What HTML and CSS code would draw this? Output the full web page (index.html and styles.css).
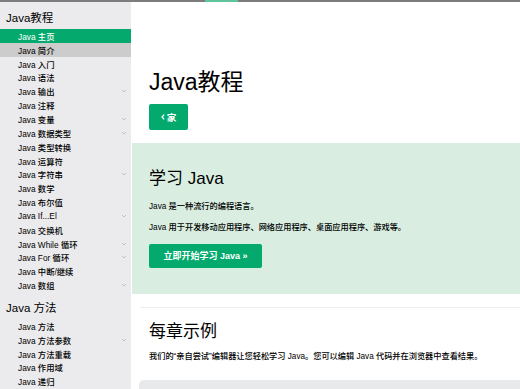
FILE: index.html
```html
<!DOCTYPE html>
<html lang="zh-CN">
<head>
    <meta charset="UTF-8">
    <meta name="viewport" content="width=device-width, initial-scale=1.0">
    <title>Java 教程</title>
    <link rel="stylesheet" href="styles.css">
</head>
<body>
    <div class="topbar"><span class="topbar-mark"></span></div>

    <div class="page">
        <nav class="sidebar">
            <h2 class="side-title">Java教程</h2>
            <a class="side-link active">Java 主页</a>
            <a class="side-link hover">Java 简介</a>
            <a class="side-link">Java 入门</a>
            <a class="side-link">Java 语法</a>
            <a class="side-link">Java 输出<svg class="chev" viewBox="0 0 6 4"><path d="M1 1l2 2 2-2"/></svg></a>
            <a class="side-link">Java 注释</a>
            <a class="side-link">Java 变量<svg class="chev" viewBox="0 0 6 4"><path d="M1 1l2 2 2-2"/></svg></a>
            <a class="side-link">Java 数据类型<svg class="chev" viewBox="0 0 6 4"><path d="M1 1l2 2 2-2"/></svg></a>
            <a class="side-link">Java 类型转换</a>
            <a class="side-link">Java 运算符</a>
            <a class="side-link">Java 字符串<svg class="chev" viewBox="0 0 6 4"><path d="M1 1l2 2 2-2"/></svg></a>
            <a class="side-link">Java 数学</a>
            <a class="side-link">Java 布尔值</a>
            <a class="side-link">Java If...El<svg class="chev" viewBox="0 0 6 4"><path d="M1 1l2 2 2-2"/></svg></a>
            <a class="side-link">Java 交换机</a>
            <a class="side-link">Java While 循环<svg class="chev" viewBox="0 0 6 4"><path d="M1 1l2 2 2-2"/></svg></a>
            <a class="side-link">Java For 循环<svg class="chev" viewBox="0 0 6 4"><path d="M1 1l2 2 2-2"/></svg></a>
            <a class="side-link">Java 中断/继续</a>
            <a class="side-link">Java 数组<svg class="chev" viewBox="0 0 6 4"><path d="M1 1l2 2 2-2"/></svg></a>

            <h2 class="side-title">Java 方法</h2>
            <a class="side-link">Java 方法</a>
            <a class="side-link">Java 方法参数<svg class="chev" viewBox="0 0 6 4"><path d="M1 1l2 2 2-2"/></svg></a>
            <a class="side-link">Java 方法重载</a>
            <a class="side-link">Java 作用域</a>
            <a class="side-link">Java 递归</a>
        </nav>

        <main class="content">
            <div class="intro">
                <h1>Java教程</h1>
                <a class="btn btn-home"><svg class="home-arrow" viewBox="0 0 4 6"><path d="M3.2 0.6L1 3l2.2 2.4"/></svg>家</a>
            </div>

            <section class="learn">
                <h2>学习 Java</h2>
                <p>Java 是一种流行的编程语言。</p>
                <p>Java 用于开发移动应用程序、网络应用程序、桌面应用程序、游戏等。</p>
                <a class="btn btn-start">立即开始学习 Java »</a>
            </section>

            <hr class="divider">

            <section class="examples">
                <h2>每章示例</h2>
                <p>我们的“亲自尝试”编辑器让您轻松学习 Java。您可以编辑 Java 代码并在浏览器中查看结果。</p>
            </section>
            <div class="example-box"></div>
        </main>
    </div>
</body>
</html>
```

FILE: styles.css
```css
html, body {
    margin: 0;
    padding: 0;
    height: 100%;
    overflow: hidden;
}

body {
    font-family: 'Liberation Sans', 'Noto Sans CJK SC', sans-serif;
    color: #000;
    background: #fff;
}

.topbar {
    height: 2px;
    background: #7d7d7f;
}

.topbar-mark {
    display: block;
    width: 33px;
    height: 2px;
    margin-left: 205px;
    background: #5fc39b;
}

.page {
    display: flex;
    height: 387px;
    overflow: hidden;
}

/* 侧边栏 */
.sidebar {
    width: 131px;
    flex-shrink: 0;
    background: #ebebed;
    display: flex;
    flex-direction: column;
}

.side-title {
    margin: 0;
    height: 27px;
    box-sizing: border-box;
    padding: 9px 0 0 6px;
    font-size: 11.5px;
    line-height: 15px;
    font-weight: normal;
}

.side-link {
    display: flex;
    align-items: center;
    justify-content: space-between;
    flex-shrink: 0;
    height: 13.85px;
    padding: 0 4px 0 18px;
    font-size: 8.3px;
    font-weight: 500;
    color: #000;
}

.side-link.active {
    background: #04aa6d;
    color: #fff;
}

.side-link.hover {
    background: #cccccc;
}

.chev {
    width: 6px;
    height: 4px;
    fill: none;
    stroke: #bdbdbf;
    stroke-width: 0.9;
}

/* 主内容 */
.content {
    flex: 1;
    padding-left: 1px;
    overflow: hidden;
}

.intro {
    padding: 66px 17px 0;
}

h1 {
    margin: 0;
    font-size: 23px;
    line-height: 28px;
    font-weight: normal;
}

.btn {
    display: inline-flex;
    align-items: center;
    justify-content: center;
    background: #04aa6d;
    color: #fff;
    font-weight: bold;
    border-radius: 2px;
}

.btn-home {
    margin-top: 8px;
    width: 39px;
    height: 26px;
    font-size: 9.5px;
    gap: 2px;
}

.home-arrow {
    width: 4px;
    height: 6px;
    fill: none;
    stroke: #fff;
    stroke-width: 1.3;
}

.learn {
    margin-top: 13px;
    background: #d9eee1;
    padding: 25px 17px 26px;
}

.learn h2,
.examples h2 {
    margin: 0;
    font-size: 17px;
    line-height: 22px;
    font-weight: normal;
}

.learn p,
.examples p {
    margin: 0;
    font-size: 8.2px;
    line-height: 12px;
    font-weight: 500;
}

.learn p:first-of-type {
    margin-top: 10.7px;
}

.learn p + p {
    margin-top: 9.3px;
}

.btn-start {
    margin-top: 10px;
    width: 113px;
    height: 24px;
    font-size: 9px;
}

.divider {
    margin: 13px 0 0 8px;
    border: none;
    border-top: 1px solid #eeeeee;
}

.examples {
    padding: 13px 17px 0;
}

.examples p {
    margin-top: 8px;
}

.example-box {
    margin: 17px 0 0 7px;
    height: 20px;
    background: #e7e9eb;
    border-radius: 5px 0 0 0;
}
```
